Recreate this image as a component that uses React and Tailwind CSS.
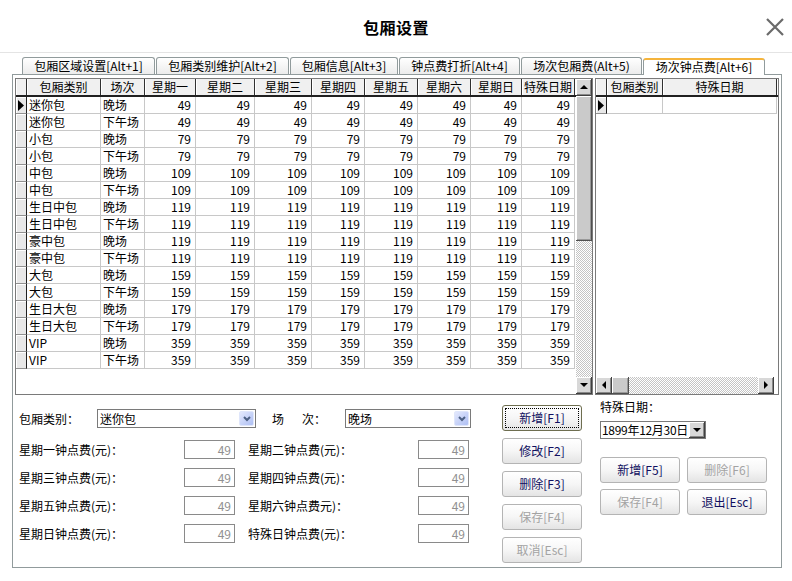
import React from 'react'

const COLS = 'grid-cols-[11px_74px_44px_51px_59px_57px_53px_53px_53px_51px_53px]'
const HEAD = ['包厢类别', '场次', '星期一', '星期二', '星期三', '星期四', '星期五', '星期六', '星期日', '特殊日期']

const ROWS = [
  ['迷你包', '晚场', 49], ['迷你包', '下午场', 49],
  ['小包', '晚场', 79], ['小包', '下午场', 79],
  ['中包', '晚场', 109], ['中包', '下午场', 109],
  ['生日中包', '晚场', 119], ['生日中包', '下午场', 119],
  ['豪中包', '晚场', 119], ['豪中包', '下午场', 119],
  ['大包', '晚场', 159], ['大包', '下午场', 159],
  ['生日大包', '晚场', 179], ['生日大包', '下午场', 179],
  ['VIP', '晚场', 359], ['VIP', '下午场', 359],
]

const TABS = [
  ['包厢区域设置[Alt+1]', 'w-[133px]'],
  ['包厢类别维护[Alt+2]', 'w-[133px]'],
  ['包厢信息[Alt+3]', 'w-[108px]'],
  ['钟点费打折[Alt+4]', 'w-[121px]'],
  ['场次包厢费(Alt+5)', 'w-[121px]'],
]

const bevel = 'bg-[#d8d8d8] border-r border-b border-[#404040] shadow-[inset_1px_1px_0_#fff,inset_-1px_-1px_0_#888]'
const checker = 'bg-[repeating-conic-gradient(#c4c4c4_0_25%,#fff_0_50%)] bg-size-[2px_2px]'

function Arrow({ dir }) {
  const d = {
    up: 'M0 4 L4 0 L8 4 Z',
    down: 'M0 0 L8 0 L4 4 Z',
    left: 'M4 0 L4 8 L0 4 Z',
    right: 'M0 0 L4 4 L0 8 Z',
  }[dir]
  const vert = dir === 'up' || dir === 'down'
  return (
    <svg width={vert ? 8 : 4} height={vert ? 4 : 8} viewBox={vert ? '0 0 8 4' : '0 0 4 8'}>
      <path d={d} fill="#000" />
    </svg>
  )
}

function Pointer() {
  return (
    <svg width="6" height="11" viewBox="0 0 6 11"><path d="M0 0 L6 5.5 L0 11 Z" fill="#000" /></svg>
  )
}

function Indicator({ active }) {
  return (
    <div className="bg-[#e8e8e8] border-r border-b border-r-[#202020] border-b-[#909090] shadow-[inset_1px_1px_0_#fff] flex items-center pl-[2px]">
      {active && <Pointer />}
    </div>
  )
}

function HeadCell({ children }) {
  return (
    <div className="flex items-center justify-center bg-[#f0f0f0] border-r border-[#303030] shadow-[inset_1px_0_0_#fff] whitespace-nowrap overflow-hidden">
      {children}
    </div>
  )
}

function Btn({ label, disabled, focus, className = '' }) {
  return (
    <div className={`h-[26px] rounded-[3px] border bg-gradient-to-b from-white via-[#f6f6f6] to-[#e4e4e4] flex items-center justify-center p-[2px] ${focus ? 'border-[#6e6e50]' : 'border-[#b4b4b4]'} ${className}`}>
      <div className={`w-full h-full flex items-center justify-center ${focus ? 'border border-dotted border-black' : ''} ${disabled ? 'text-[#a3a3a3]' : 'text-[#101060]'}`}>
        {label}
      </div>
    </div>
  )
}

function Combo({ value, width }) {
  return (
    <div className={`${width} h-[19px] border border-[#7a7a7a] bg-white flex items-center justify-between pl-[2px] pr-[1px]`}>
      <span>{value}</span>
      <div className="w-[15px] h-[15px] rounded-[2px] border border-[#dfe6fb] bg-gradient-to-br from-[#e4e9fd] to-[#aebff3] flex items-center justify-center">
        <svg width="8" height="6" viewBox="0 0 8 6"><path d="M1 1 L4 4 L7 1" stroke="#4d6185" strokeWidth="2" fill="none" /></svg>
      </div>
    </div>
  )
}

function FeeRow({ a, b }) {
  return (
    <div className="h-[19px] flex items-center">
      <span className="w-[165px] whitespace-nowrap">{a}</span>
      <div className="w-[51px] h-[19px] border border-[#8a8a8a] bg-white flex items-center justify-end pr-[3px] text-[#909090]">49</div>
      <span className="ml-[13px] w-[170px] whitespace-nowrap">{b}</span>
      <div className="w-[51px] h-[19px] border border-[#8a8a8a] bg-white flex items-center justify-end pr-[3px] text-[#909090]">49</div>
    </div>
  )
}

export default function App() {
  return (
    <div className="w-[792px] h-[581px] overflow-hidden bg-white flex flex-col text-[12px] leading-none text-black font-['Noto_Sans_CJK_SC','Noto_Sans',sans-serif]">
      {/* Title bar */}
      <div className="h-[53px] shrink-0 border-b border-[#e4e4e4] grid grid-cols-[1fr_auto_1fr] items-center pt-[2px]">
        <div />
        <h1 className="text-[16px] font-bold tracking-[0.5px]">包厢设置</h1>
        <div className="flex justify-end pr-[8px]">
          <svg width="18" height="18" viewBox="0 0 18 18">
            <path d="M1 1 L17 17 M17 1 L1 17" stroke="#6a6a6a" strokeWidth="2.2" />
          </svg>
        </div>
      </div>

      {/* Tabs */}
      <div className="h-[21px] shrink-0 flex items-end gap-[1px] pl-[22px] relative z-10">
        {TABS.map(([t, w]) => (
          <div key={t} className={`${w} h-[17px] border border-b-0 border-[#919b9c] rounded-t-[3px] bg-gradient-to-b from-white to-[#ececec] flex items-center justify-center whitespace-nowrap`}>
            {t}
          </div>
        ))}
        <div className="w-[122px] h-[17px] mb-[-1px] border-x border-[#919b9c] border-t-2 border-t-[#f5b43c] rounded-t-[3px] bg-white flex items-center justify-center whitespace-nowrap pb-[1px]">
          场次钟点费[Alt+6]
        </div>
      </div>

      {/* Panel */}
      <div className="mx-[12px] w-[770px] h-[494px] border border-[#919b9c] px-[2px] pt-[3px] flex flex-col">
        <div className="flex gap-[2px]">
          {/* Main grid */}
          <div className="w-[578px] h-[317px] border border-[#7a7a7a] flex">
            <div className="w-[560px] flex flex-col">
              <div className={`grid ${COLS} h-[18px] border-b-2 border-[#202020]`}>
                <div className="bg-[#f0f0f0] border-r border-[#303030] shadow-[inset_1px_0_0_#fff]" />
                {HEAD.map(h => <HeadCell key={h}>{h}</HeadCell>)}
              </div>
              {ROWS.map(([name, sess, price], i) => (
                <div key={i} className={`grid ${COLS} h-[17px]`}>
                  <Indicator active={i === 0} />
                  <div className="border-r border-b border-[#c8c8c8] flex items-center px-[2px] whitespace-nowrap">{name}</div>
                  <div className="border-r border-b border-[#c8c8c8] flex items-center px-[2px] whitespace-nowrap">{sess}</div>
                  {Array.from({ length: 8 }).map((_, k) => (
                    <div key={k} className="border-r border-b border-[#c8c8c8] flex items-center justify-end pr-[4px]">{price}</div>
                  ))}
                </div>
              ))}
            </div>
            {/* Vertical scrollbar */}
            <div className="w-[16px] flex flex-col">
              <div className={`h-[17px] ${bevel} flex items-center justify-center`}><Arrow dir="up" /></div>
              <div className="h-[145px] bg-[#cacaca] border-r border-b border-[#505050] shadow-[inset_1px_1px_0_#fff,inset_-1px_-1px_0_#999]" />
              <div className={`flex-1 ${checker}`} />
              <div className={`h-[17px] ${bevel} flex items-center justify-center`}><Arrow dir="down" /></div>
            </div>
          </div>

          {/* Side grid */}
          <div className="w-[184px] h-[317px] border border-[#7a7a7a] flex flex-col">
            <div className="grid grid-cols-[11px_56px_114px] h-[18px] border-b-2 border-[#202020]">
              <div className="bg-[#f0f0f0] border-r border-[#303030] shadow-[inset_1px_0_0_#fff]" />
              <HeadCell>包厢类别</HeadCell>
              <HeadCell>特殊日期</HeadCell>
            </div>
            <div className="grid grid-cols-[11px_56px_114px] h-[17px]">
              <Indicator active />
              <div className="border-r border-b border-[#c8c8c8]" />
              <div className="border-r border-b border-[#c8c8c8]" />
            </div>
            <div className="flex-1" />
            <div className="h-[17px] flex pr-[4px]">
              <div className={`w-[16px] ${bevel} flex items-center justify-center`}><Arrow dir="left" /></div>
              <div className="w-[17px] bg-[#cacaca] border-r border-b border-[#505050] shadow-[inset_1px_1px_0_#fff,inset_-1px_-1px_0_#999]" />
              <div className={`flex-1 ${checker}`} />
              <div className={`w-[16px] ${bevel} flex items-center justify-center`}><Arrow dir="right" /></div>
            </div>
          </div>
        </div>

        {/* Bottom form */}
        <div className="flex">
          <div className="w-[487px] pl-[4px] pt-[14px] flex flex-col">
            <div className="h-[19px] flex items-center">
              <span className="w-[78px]">包厢类别：</span>
              <Combo value="迷你包" width="w-[159px]" />
              <span className="ml-[16px] w-[73px] flex">
                <span>场</span><span className="ml-[18px]">次：</span>
              </span>
              <Combo value="晚场" width="w-[126px]" />
            </div>
            <div className="mt-[12px] flex flex-col gap-[9px]">
              <FeeRow a="星期一钟点费(元)：" b="星期二钟点费(元)：" />
              <FeeRow a="星期三钟点费(元)：" b="星期四钟点费(元)：" />
              <FeeRow a="星期五钟点费(元)：" b="星期六钟点费元)：" />
              <FeeRow a="星期日钟点费(元)：" b="特殊日钟点费(元)：" />
            </div>
          </div>

          <div className="w-[80px] pt-[10px] flex flex-col gap-[7px]">
            <Btn label="新增[F1]" focus />
            <Btn label="修改[F2]" />
            <Btn label="删除[F3]" />
            <Btn label="保存[F4]" disabled />
            <Btn label="取消[Esc]" disabled />
          </div>

          <div className="ml-[18px] pt-[4px] flex flex-col">
            <div className="h-[16px] flex items-center">特殊日期：</div>
            <div className="mt-[6px] w-[106px] h-[18px] border border-[#7a7a7a] bg-white flex items-center justify-between pl-[1px]">
              <span className="whitespace-nowrap tracking-[-0.3px]">1899年12月30日</span>
              <div className={`w-[16px] h-[16px] ${bevel} flex items-center justify-center`}><Arrow dir="down" /></div>
            </div>
            <div className="mt-[18px] grid grid-cols-[80px_80px] gap-x-[7px] gap-y-[6px]">
              <Btn label="新增[F5]" />
              <Btn label="删除[F6]" disabled />
              <Btn label="保存[F4]" disabled />
              <Btn label="退出[Esc]" />
            </div>
          </div>
        </div>
      </div>
    </div>
  )
}
